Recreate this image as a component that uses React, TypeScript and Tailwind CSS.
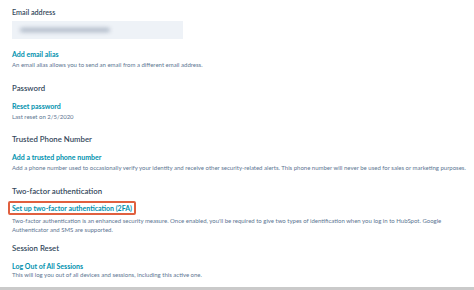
import React from "react";

const font = { fontFamily: "Lato, 'Open Sans', sans-serif" };

function Heading({ children, className = "" }: { children: React.ReactNode; className?: string }) {
  return (
    <p className={`text-[7.8px] leading-[10px] font-semibold text-[#33475b] ${className}`}>{children}</p>
  );
}

function Link({ children, className = "" }: { children: React.ReactNode; className?: string }) {
  return (
    <p className={`text-[7px] leading-[10px] font-bold text-[#0091ae] whitespace-nowrap ${className}`}>{children}</p>
  );
}

function Note({ children, className = "" }: { children: React.ReactNode; className?: string }) {
  return <p className={`text-[6px] leading-[8px] text-[#5d7592] ${className}`}>{children}</p>;
}

export default function App() {
  return (
    <div className="bg-white w-[474px] h-[290px] flex flex-col overflow-hidden" style={font}>
      <div className="flex flex-col pl-3 pt-2 w-[474px]">
        <p className="text-[7.2px] leading-[10px] font-semibold text-[#33475b]">Email address</p>
        <div className="mt-[3px] w-[171px] h-[18px] bg-[#eef2f7] flex items-center pl-2">
          <div className="w-[90px] h-[4px] rounded bg-[#a9b4c4] blur-[2px]" />
        </div>

        <Link className="mt-[10px]">Add email alias</Link>
        <Note className="mt-[2px]">An email alias allows you to send an email from a different email address.</Note>

        <Heading className="mt-[14px]">Password</Heading>
        <Link className="mt-[8px]">Reset password</Link>
        <Note className="mt-[2px]">Last reset on 2/5/2020</Note>

        <Heading className="mt-[12.5px]">Trusted Phone Number</Heading>
        <Link className="mt-[8px]">Add a trusted phone number</Link>
        <Note className="mt-[2px] whitespace-nowrap">
          Add a phone number used to occasionally verify your identity and receive other security-related alerts. This phone number will never be used for sales or marketing purposes.
        </Note>

        <Heading className="mt-[14px]">Two-factor authentication</Heading>
        <div className="mt-[5px] -ml-[4px] self-start border-2 border-[#e0603f] rounded-[2px] px-[2px]">
          <Link>Set up two-factor authentication (2FA)</Link>
        </div>
        <Note className="mt-[1px] leading-[9px] w-[440px]">
          Two-factor authentication is an enhanced security measure. Once enabled, you'll be required to give two types of identification when you log in to HubSpot. Google Authenticator and SMS are supported.
        </Note>

        <Heading className="mt-[9.5px]">Session Reset</Heading>
        <Link className="mt-[7.5px]">Log Out of All Sessions</Link>
        <Note className="mt-[0px]">This will log you out of all devices and sessions, including this active one.</Note>
      </div>
      <div className="mt-auto h-[3px] w-full bg-[#cacaca]" />
    </div>
  );
}
